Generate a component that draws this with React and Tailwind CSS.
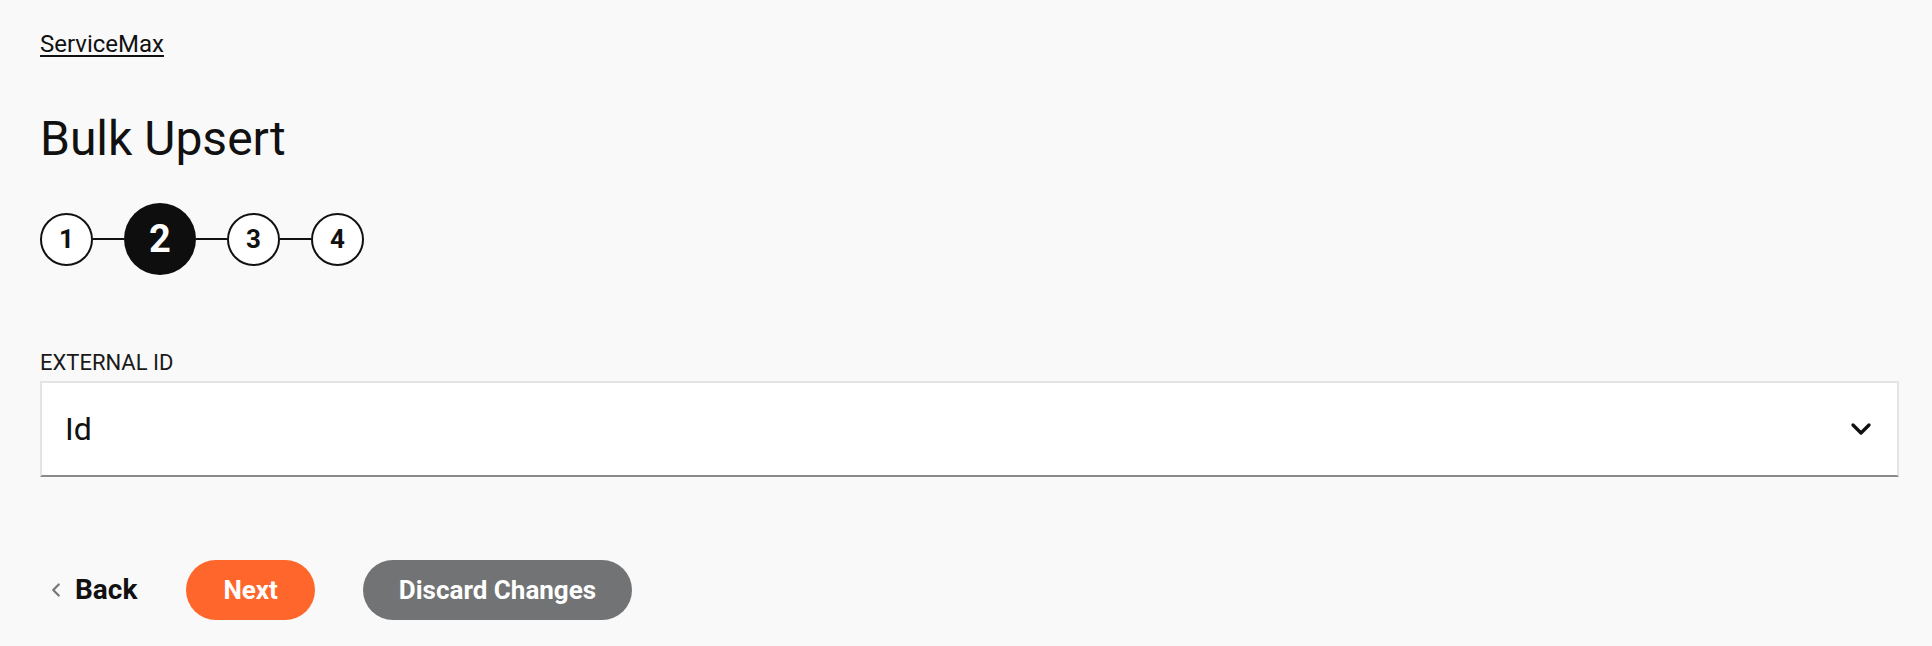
import { ChevronDown, ChevronLeft } from "lucide-react";

function App() {
  const steps = [1, 2, 3, 4];
  const active = 2;

  return (
    <div className="min-h-[646px] bg-[#f9f9f9] pl-10 pr-[33px] pt-[30px] text-[#111] font-['Roboto',sans-serif]">
      {/* Breadcrumb */}
      <a href="#" className="block w-fit text-[24px] leading-[28px] underline underline-offset-[3px] decoration-[1.5px]">
        ServiceMax
      </a>

      {/* Title */}
      <h1 className="mt-[53px] text-[48px] leading-[56px] font-normal">Bulk Upsert</h1>

      {/* Stepper */}
      <div className="mt-[36px] flex items-center">
        {steps.map((step, i) => (
          <div key={step} className="flex items-center">
            {i > 0 && <div className="h-[2px] w-[31px] bg-[#111]"></div>}
            {step === active ? (
              <div className="flex h-[72px] w-[72px] items-center justify-center rounded-full bg-[#0e0e0e] text-[38px] font-bold text-white">
                {step}
              </div>
            ) : (
              <div className="flex h-[53px] w-[53px] items-center justify-center rounded-full border-2 border-[#111] bg-white text-[26px] font-bold">
                {step}
              </div>
            )}
          </div>
        ))}
      </div>

      {/* External ID */}
      <label className="mt-[75px] block text-[22px] leading-[26px] text-[#1a1a1a]">EXTERNAL ID</label>
      <div className="mt-[5px] flex h-[96px] items-center justify-between border-2 border-[#e4e4e4] border-b-[#8a8a8a] bg-white pl-[23px] pr-[20px]">
        <span className="text-[32px]">Id</span>
        <ChevronDown size={32} strokeWidth={2.5} className="text-[#111]" />
      </div>

      {/* Actions */}
      <div className="mt-[83px] flex items-center">
        <button className="flex items-center gap-[8px] pl-[5px] text-[28px] font-bold">
          <ChevronLeft size={22} strokeWidth={2.5} className="text-[#777]" />
          Back
        </button>
        <button className="ml-[49px] h-[60px] rounded-full bg-[#ff662b] px-[37px] text-[26px] font-bold text-white">
          Next
        </button>
        <button className="ml-[48px] h-[60px] rounded-full bg-[#717374] px-[36px] text-[26px] font-bold text-white">
          Discard Changes
        </button>
      </div>
    </div>
  );
}

export default App;
